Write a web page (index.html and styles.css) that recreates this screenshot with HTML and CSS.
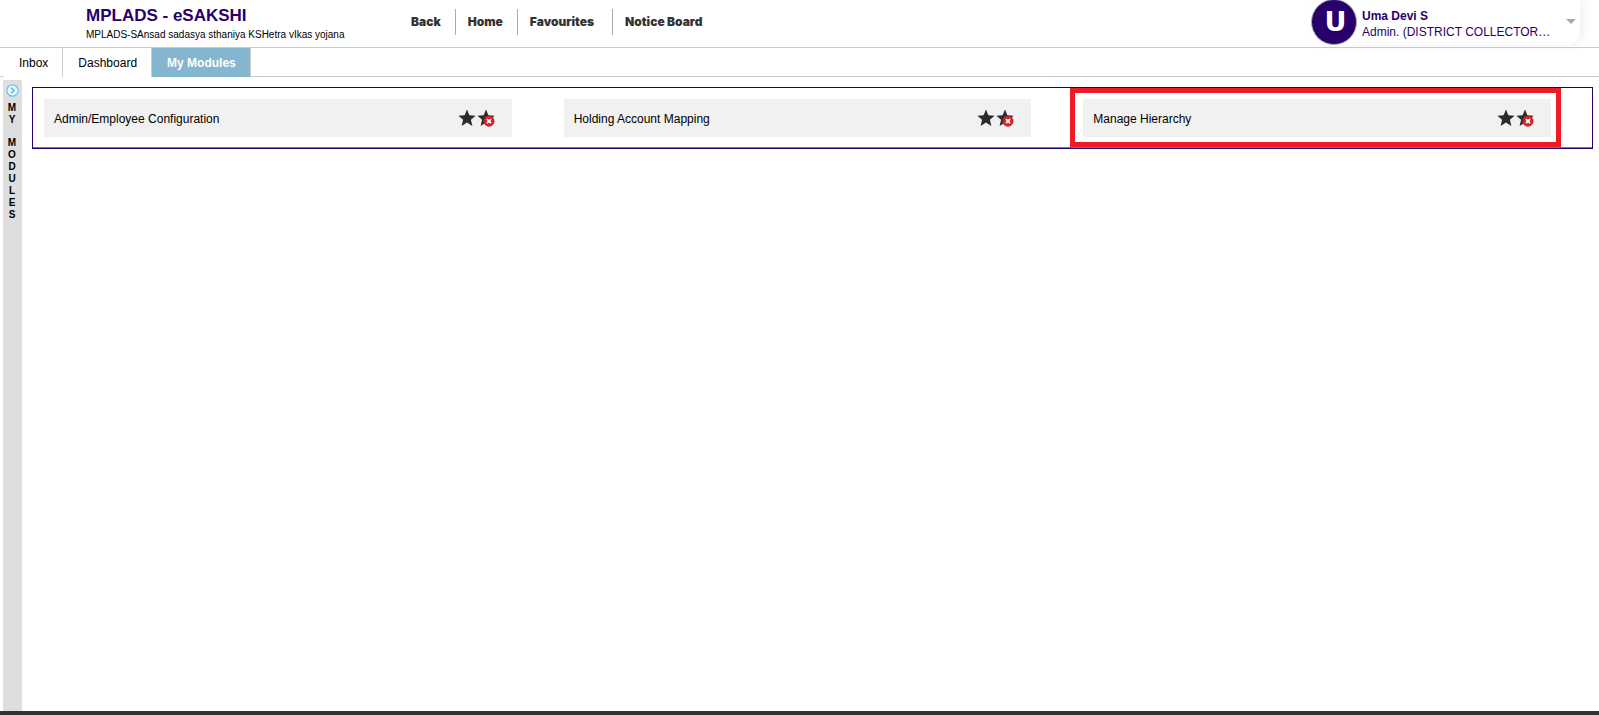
FILE: index.html
```html
<!DOCTYPE html>
<html lang="en">
<head>
<meta charset="utf-8">
<title>MPLADS - eSAKSHI</title>
<link rel="stylesheet" href="styles.css">
</head>
<body>
<svg class="defs" aria-hidden="true">
  <defs>
    <symbol id="star" viewBox="0 0 18 18">
      <path d="M9 .6 11.4 6.3 17.6 6.8 12.9 10.8 14.4 16.9 9 13.6 3.6 16.9 5.1 10.8 .4 6.8 6.6 6.3Z" fill="#2b2b2b"/>
    </symbol>
    <symbol id="star-remove" viewBox="0 0 18 18">
      <path d="M9 .6 11.4 6.3 17.6 6.8 12.9 10.8 14.4 16.9 9 13.6 3.6 16.9 5.1 10.8 .4 6.8 6.6 6.3Z" fill="#2b2b2b"/>
      <circle cx="12" cy="12.2" r="5.5" fill="#d3232b"/>
      <path d="M10 10.2l4 4m0-4l-4 4" stroke="#fff" stroke-width="1.8"/>
    </symbol>
  </defs>
</svg>
<header class="header">
  <div class="brand">
    <h1 class="brand-name">MPLADS - eSAKSHI</h1>
    <p class="brand-sub">MPLADS-SAnsad sadasya sthaniya KSHetra vIkas yojana</p>
  </div>
  <nav class="main-nav">
    <a class="nav-link" href="#">Back</a>
    <a class="nav-link" href="#">Home</a>
    <a class="nav-link nav-wide" href="#">Favourites</a>
    <a class="nav-link" href="#">Notice Board</a>
  </nav>
  <button class="user" type="button">
    <span class="avatar">U</span>
    <span class="user-text">
      <span class="user-name">Uma Devi S</span>
      <span class="user-role">Admin. (DISTRICT COLLECTOR…</span>
    </span>
    <svg class="caret" viewBox="0 0 10 5" aria-hidden="true"><path d="M0 0h10L5 5z" fill="#aaa"/></svg>
  </button>
</header>
<nav class="tabs">
  <a class="tab" href="#">Inbox</a>
  <a class="tab" href="#">Dashboard</a>
  <a class="tab tab-active" href="#">My Modules</a>
</nav>
<div class="body">
  <aside class="rail">
    <button class="rail-toggle" type="button" aria-label="Expand">
      <svg class="rail-icon" viewBox="0 0 13 13"><circle cx="6.5" cy="6.5" r="5.7" fill="#e6f6fc" stroke="#69c3e6" stroke-width="1.2"/><path d="M5.2 3.8 8 6.5 5.2 9.2" fill="none" stroke="#4fb3dc" stroke-width="1.4"/></svg>
    </button>
    <div class="rail-word">M<br>Y</div>
    <div class="rail-word">M<br>O<br>D<br>U<br>L<br>E<br>S</div>
  </aside>
  <main class="main">
    <section class="panel">
      <div class="cell">
        <div class="card"><a class="card-title" href="#">Admin/Employee Configuration</a>
          <button class="icon-button" type="button" aria-label="Favourite"><svg class="icon"><use href="#star"/></svg></button>
          <button class="icon-button" type="button" aria-label="Remove favourite"><svg class="icon"><use href="#star-remove"/></svg></button></div>
      </div>
      <div class="cell">
        <div class="card"><a class="card-title" href="#">Holding Account Mapping</a>
          <button class="icon-button" type="button" aria-label="Favourite"><svg class="icon"><use href="#star"/></svg></button>
          <button class="icon-button" type="button" aria-label="Remove favourite"><svg class="icon"><use href="#star-remove"/></svg></button></div>
      </div>
      <div class="cell">
        <div class="card card-marked"><a class="card-title" href="#">Manage Hierarchy</a>
          <button class="icon-button" type="button" aria-label="Favourite"><svg class="icon"><use href="#star"/></svg></button>
          <button class="icon-button" type="button" aria-label="Remove favourite"><svg class="icon"><use href="#star-remove"/></svg></button></div>
      </div>
    </section>
  </main>
</div>
<footer class="footer"></footer>
</body>
</html>
```
FILE: styles.css
```css
* { box-sizing: border-box; }

body {
  margin: 0;
  min-height: 100vh;
  display: flex;
  flex-direction: column;
  background: #fff;
  color: #000;
  font: 12px/16px "Liberation Sans", Arial, sans-serif;
}

a { color: inherit; text-decoration: none; }
button { border: 0; padding: 0; background: none; font: inherit; color: inherit; cursor: pointer; }
.defs { position: absolute; width: 0; height: 0; }

.header {
  display: flex;
  align-items: flex-start;
  height: 48px;
  padding: 0 19px 0 86px;
  border-bottom: 1px solid #ccc;
}

.brand { width: 310px; padding-top: 6px; }
.brand-name { margin: 0; font-size: 17px; line-height: 20px; color: #27006b; }
.brand-sub { margin: 1px 0 0; font-size: 10px; }

.main-nav { display: flex; padding-top: 9px; }
.nav-link {
  padding: 0 14px;
  font: 900 12px/26px Inter, "Arial Black", sans-serif;
  color: #333;
  border-left: 1px solid #aaa;
}
.nav-link:first-child { border-left: 0; padding-left: 15px; }
.nav-link:nth-child(n+2) { padding-left: 12px; }
.nav-wide { padding-right: 18px; }

.user {
  display: flex;
  width: 269px;
  height: 45px;
  margin-left: auto;
  text-align: left;
  color: #27006b;
  border-radius: 0 0 14px 14px;
  box-shadow: 4px 0 10px #0000000f;
}
.avatar {
  width: 46px;
  height: 46px;
  margin-top: -1px;
  padding-left: 3px;
  border-radius: 50%;
  border: 1px solid #aaa;
  background: #27006b;
  color: #fff;
  font: bold 27px/44px "DejaVu Sans", sans-serif;
  text-align: center;
}
.user-text { display: flex; flex-direction: column; padding: 8px 0 0 5px; }
.user-name { font-weight: bold; }
.caret { width: 10px; height: 5px; margin: 19px 4px 0 auto; }

.tabs {
  display: flex;
  height: 29px;
  padding-left: 4px;
  border-bottom: 1px solid #ccc;
}
.tab {
  height: 29px;
  padding: 0 14px 0 15px;
  background: #fff;
  line-height: 30px;
  border-right: 1px solid #ccc;
}
.tab-active { background: #84b6d0; color: #fff; font-weight: bold; }

.body { flex: 1; display: flex; gap: 10px; padding: 3px 6px 0 3px; }

.rail {
  display: flex;
  flex-direction: column;
  align-items: center;
  gap: 11px;
  width: 19px;
  padding: 4px 1px 0 0;
  background: #dedede;
  text-align: center;
}
.rail-toggle, .rail-icon { display: block; width: 13px; height: 13px; }
.rail-toggle { margin-bottom: -6px; }
.rail-word { font-size: 10px; line-height: 12px; font-weight: bold; }

.main { flex: 1; padding-top: 7px; }
.panel {
  display: grid;
  grid-template-columns: repeat(3, 1fr);
  border: 1px solid #27006b;
  box-shadow: inset 0 -1px #777;
}
.cell { padding: 11px 41px 11px 11px; }
.card {
  position: relative;
  display: flex;
  align-items: center;
  height: 38px;
  padding: 0 17px 0 10px;
  background: #f1f1f1;
}
.card-marked::after {
  content: "";
  position: absolute;
  inset: -11px -10px -10px -13px;
  border: 5px solid #ed1c24;
  pointer-events: none;
}
.card-title { flex: 1; line-height: 18px; padding-top: 2px; }
.icon-button, .icon { display: block; width: 18px; height: 18px; }
.icon-button + .icon-button { margin-left: 1px; }

.footer { height: 4px; background: #333; }
```
